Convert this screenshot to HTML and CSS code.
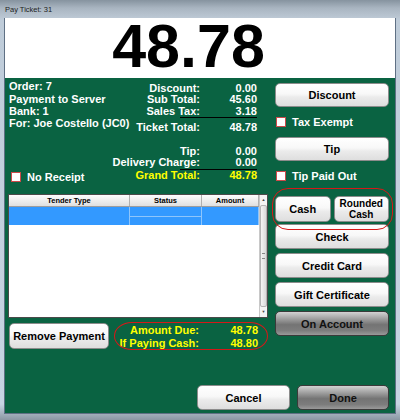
FILE: index.html
```html
<!DOCTYPE html>
<html>
<head>
<meta charset="utf-8">
<title>Pay Ticket: 31</title>
<link rel="stylesheet" href="styles.css">
</head>
<body>
<div class="window">
  <div class="titlebar">Pay Ticket: 31</div>
  <div class="client">
    <div class="display">48.78</div>
    <div class="panel">
      <div class="top">
        <div class="left">
          <div class="info">
            <div class="order">
              <div>Order: 7</div>
              <div>Payment to Server</div>
              <div>Bank: 1</div>
              <div>For: Joe Costello (JC0)</div>
              <div class="check no-receipt"><span class="box"></span>No Receipt</div>
            </div>
            <div class="totals">
              <span>Discount:</span><span>0.00</span>
              <span>Sub Total:</span><span>45.60</span>
              <span>Sales Tax:</span><span>3.18</span>
              <div class="rule"></div>
              <span class="tt">Ticket Total:</span><span class="tt">48.78</span>
              <span class="tip">Tip:</span><span class="tip">0.00</span>
              <span>Delivery Charge:</span><span>0.00</span>
              <div class="rule"></div>
              <span class="grand">Grand Total:</span><span class="grand">48.78</span>
            </div>
          </div>
          <div class="tender">
            <div class="tgrid">
              <div class="thead">
                <div>Tender Type</div>
                <div>Status</div>
                <div>Amount</div>
              </div>
              <div class="trow">
                <div></div>
                <div class="split"><div></div><div></div></div>
                <div></div>
              </div>
            </div>
            <div class="scroll">
              <div class="arrow">&#9650;</div>
              <div class="thumb"></div>
              <div class="arrow">&#9660;</div>
            </div>
          </div>
          <div class="bottom">
            <button class="btn remove">Remove Payment</button>
            <div class="due">
              <span>Amount Due:</span><span>48.78</span>
              <span>If Paying Cash:</span><span>48.80</span>
              <div class="oval"></div>
            </div>
          </div>
        </div>
        <div class="right">
          <button class="btn b-discount">Discount</button>
          <div class="check tax"><span class="box"></span>Tax Exempt</div>
          <button class="btn b-tip">Tip</button>
          <div class="check tippaid"><span class="box"></span>Tip Paid Out</div>
          <div class="cashrow">
            <button class="btn">Cash</button>
            <button class="btn rounded">Rounded<br>Cash</button>
            <div class="oval cash-oval"></div>
          </div>
          <button class="btn b-check">Check</button>
          <button class="btn b-more">Credit Card</button>
          <button class="btn b-more">Gift Certificate</button>
          <button class="btn b-more dark">On Account</button>
        </div>
      </div>
      <div class="footer">
        <button class="btn b-cancel">Cancel</button>
        <button class="btn b-done dark">Done</button>
      </div>
    </div>
  </div>
</div>
</body>
</html>
```
FILE: styles.css
```css
* { box-sizing: border-box; }
html, body { margin: 0; padding: 0; }
body {
  width: 400px;
  height: 420px;
  overflow: hidden;
  font-family: "Liberation Sans", Arial, sans-serif;
  background: #c4d2e0;
}
.window {
  width: 400px;
  height: 420px;
  display: flex;
  flex-direction: column;
  background: linear-gradient(180deg, #9eabb8 0, #bfccd9 20px, #c6d4e2 404px, #8b97a3 420px);
}
.titlebar {
  height: 18px;
  flex: none;
  padding-left: 5px;
  font-size: 7.5px;
  line-height: 19px;
  color: #1c1c1c;
  background: linear-gradient(180deg, #86939f 0%, #a9b5c1 45%, #bcc8d4 100%);
}
.client {
  flex: 1;
  margin: 0 4px 6px;
  border: 1px solid #5f7084;
  border-top: 0;
  display: flex;
  flex-direction: column;
}
.display {
  height: 60px;
  flex: none;
  background: #fff;
  color: #000;
  font-weight: bold;
  font-size: 61px;
  line-height: 56px;
  text-align: center;
  padding-right: 23px;
}
.panel {
  flex: 1;
  background: #0a6342;
  display: flex;
  flex-direction: column;
  padding: 0 6px 3px 3px;
  color: #fff;
  font-size: 11px;
  font-weight: bold;
}
.top { display: flex; }
.left {
  width: 260px;
  flex: none;
  display: flex;
  flex-direction: column;
}
.info {
  height: 116px;
  display: flex;
}
.order {
  flex: 1 1 0;
  min-width: 0;
  padding: 2.4px 0 0 1px;
  line-height: 12.3px;
  display: flex;
  flex-direction: column;
  white-space: nowrap;
}
.check {
  display: flex;
  align-items: center;
  height: 14px;
  line-height: 14px;
  gap: 6px;
  white-space: nowrap;
}
.box {
  width: 10px;
  height: 10px;
  flex: none;
  background: #fff;
  border: 1px solid #cc4a4a;
}
.no-receipt { margin-top: 40px; margin-left: 2px; }
.totals {
  flex: none;
  display: grid;
  grid-template-columns: auto 57px;
  justify-items: end;
  align-content: start;
  line-height: 11.5px;
  padding-top: 4.6px;
  margin-right: 11px;
  white-space: nowrap;
}
.rule {
  grid-column: 1 / -1;
  width: 77px;
  height: 1px;
  background: #000;
}
.tt { margin-top: 3.5px; }
.tip { margin-top: 12.5px; }
.grand { color: #ffff00; }

.tender {
  height: 124px;
  border: 1px solid #4a4a4a;
  background: #fff;
  display: flex;
}
.tgrid { flex: 1; }
.thead, .trow {
  display: grid;
  grid-template-columns: 121px 72px 57px;
}
.thead {
  height: 12px;
  background: linear-gradient(180deg, #fdfdfd, #e0e0e0);
  border-bottom: 1px solid #9d9d9d;
  color: #000;
  font-size: 7.5px;
  line-height: 11px;
  text-align: center;
}
.thead > div { border-right: 1px solid #b0b0b0; }
.trow {
  height: 18px;
  background: #3399ff;
}
.trow > div { border-right: 1px solid #8ec5fb; }
.split {
  display: flex;
  flex-direction: column;
}
.split > div { flex: 1; }
.split > div:first-child { border-bottom: 1px solid #8ec5fb; }
.scroll {
  width: 8px;
  flex: none;
  background: #ececec;
  border-left: 1px solid #c8c8c8;
  display: flex;
  flex-direction: column;
}
.arrow {
  height: 10px;
  font-size: 4px;
  line-height: 10px;
  text-align: center;
  color: #444;
  background: #f4f4f4;
}
.thumb {
  flex: 1;
  background: linear-gradient(90deg, #f4f4f4, #dadada);
  border: 1px solid #b4b4b4;
  border-radius: 2px;
  display: flex;
  align-items: center;
  justify-content: center;
}
.thumb::after {
  content: "";
  width: 3px;
  height: 4px;
  border-top: 1px solid #888;
  border-bottom: 1px solid #888;
}

.bottom {
  display: flex;
  margin-top: 4px;
}
.btn {
  font-family: "Liberation Sans", Arial, sans-serif;
  font-weight: bold;
  font-size: 11px;
  color: #000;
  padding: 0;
  background: linear-gradient(180deg, #ffffff 0%, #f8f8f8 45%, #ebebeb 60%, #dedede 100%);
  border: 1px solid #8c8c8c;
  border-radius: 5px;
  display: flex;
  align-items: center;
  justify-content: center;
  text-align: center;
  white-space: nowrap;
}
.dark {
  background: linear-gradient(180deg, #d2d2d2 0%, #a2a2a2 28%, #747474 55%, #7c7c7c 80%, #9a9a9a 100%);
  border-color: #3a3a3a;
  color: #111;
}
.remove {
  width: 100px;
  height: 26px;
  margin: 1px 0 0 1px;
}
.due {
  position: relative;
  width: 154px;
  height: 28px;
  margin-left: 5px;
  display: grid;
  grid-template-columns: 85px 59px;
  justify-items: end;
  align-content: start;
  padding-top: 2px;
  line-height: 13px;
  color: #ffff00;
  white-space: nowrap;
}
.oval {
  position: absolute;
  top: 0;
  left: 0;
  right: 0;
  bottom: 0;
  border: 1.5px solid #d61818;
  border-radius: 18px / 14px;
  pointer-events: none;
}
.right {
  width: 114px;
  flex: none;
  margin-left: 7px;
  display: flex;
  flex-direction: column;
}
.b-discount { height: 24px; margin-top: 5px; }
.tax { margin-top: 8px; margin-left: 1px; }
.b-tip { height: 24px; margin-top: 8px; }
.tippaid { margin-top: 8px; margin-left: 1px; }
.cashrow {
  position: relative;
  display: flex;
  gap: 3px;
  height: 26px;
  margin-top: 13px;
}
.cashrow .btn { flex: 1; }
.rounded {
  font-size: 10px;
  line-height: 11px;
}
.cash-oval {
  top: -8px;
  bottom: -8px;
  left: -3px;
  right: -4px;
  border-radius: 16px;
}
.b-check { height: 25px; margin-top: 2px; }
.b-more { height: 25px; margin-top: 4px; }
.footer {
  margin-top: auto;
  display: flex;
  justify-content: flex-end;
  gap: 7px;
}
.b-cancel { width: 93px; height: 25px; }
.b-done { width: 92px; height: 25px; }
```
